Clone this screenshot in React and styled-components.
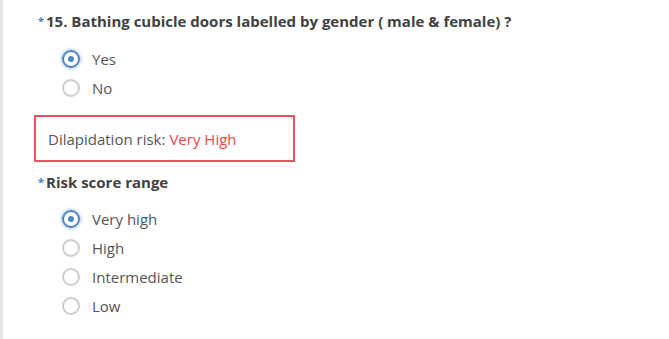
import React from "react";
import styled, { createGlobalStyle } from "styled-components";

const Global = createGlobalStyle`
  html, body { margin: 0; padding: 0; background: #fff; }
  body { font-family: "Open Sans", "Liberation Sans", Arial, sans-serif; }
  * { box-sizing: border-box; }
`;

const Page = styled.div`
  min-height: 339px;
  border-left: 3px solid #e6e6e6;
  padding: 11px 0 0 31px;
  display: flex;
  flex-direction: column;
`;

const Title = styled.div`
  font-size: 15px;
  line-height: 20px;
  height: 20px;
  font-weight: 700;
  color: #424242;
  padding-left: 4px;
  white-space: nowrap;
  margin-top: ${(p) => p.$mt || 0}px;
`;

const Star = styled.span`
  color: #4a7fbd;
  font-size: 11px;
  line-height: 0;
  font-weight: 700;
  margin-right: 2px;
  vertical-align: 2px;
`;

const Group = styled.div`
  display: flex;
  flex-direction: column;
  margin-top: ${(p) => p.$mt}px;
  padding-left: 28px;
`;

const Option = styled.label`
  height: 29px;
  display: flex;
  align-items: center;
  gap: 12px;
  font-size: 15px;
  color: #555;
  cursor: pointer;
`;

const Ring = styled.span`
  width: 18px;
  height: 18px;
  border-radius: 50%;
  border: 2px solid ${(p) => (p.$on ? "#4f86c3" : "#cdcdcd")};
  display: flex;
  align-items: center;
  justify-content: center;
  box-shadow: ${(p) => (p.$on ? "0 0 3px 1px rgba(79,134,195,0.45)" : "none")};
  flex-shrink: 0;
`;

const Dot = styled.span`
  width: 6px;
  height: 6px;
  border-radius: 50%;
  background: #4f86c3;
`;

const RiskBox = styled.div`
  margin-top: 13px;
  width: 261px;
  height: 47px;
  border: 2px solid #e9535c;
  display: flex;
  align-items: center;
  padding-left: 12px;
  font-size: 15px;
  color: #555;
  white-space: nowrap;
`;

const Red = styled.span`
  color: #e8474f;
  margin-left: 4px;
`;

function Radio({ label, on }) {
  return (
    <Option role="radio" aria-checked={on}>
      <Ring $on={on}>{on && <Dot />}</Ring>
      {label}
    </Option>
  );
}

export default function App() {
  return (
    <>
      <Global />
      <Page>
        <Title>
          <Star>*</Star>15. Bathing cubicle doors labelled by gender ( male &amp; female) ?
        </Title>
        <Group $mt={13}>
          <Radio label="Yes" on />
          <Radio label="No" />
        </Group>
        <RiskBox>
          Dilapidation risk:<Red>Very High</Red>
        </RiskBox>
        <Title $mt={10}>
          <Star>*</Star>Risk score range
        </Title>
        <Group $mt={12}>
          <Radio label="Very high" on />
          <Radio label="High" />
          <Radio label="Intermediate" />
          <Radio label="Low" />
        </Group>
      </Page>
    </>
  );
}
